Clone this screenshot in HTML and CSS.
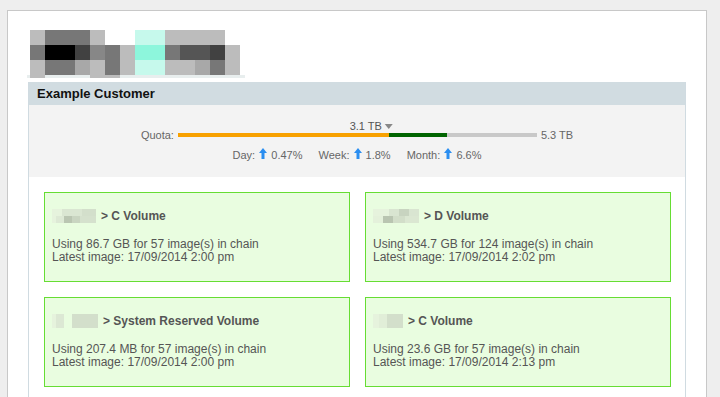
FILE: index.html
```html
<!DOCTYPE html>
<html>
<head>
<meta charset="utf-8">
<link rel="stylesheet" href="styles.css">
</head>
<body>
<div class="page">
  <div class="logo">
    <div class="logo-grid">
      <span class="g2"></span><span class="g4"></span><span class="g4"></span><span class="g4"></span><span class="g2"></span><span class="w"></span><span class="w"></span><span class="m1"></span><span class="m1"></span><span class="g2"></span><span class="g2"></span><span class="g2"></span><span class="g2"></span><span class="w"></span>
      <span class="g4"></span><span class="k"></span><span class="k"></span><span class="g6"></span><span class="g3"></span><span class="g4"></span><span class="g2"></span><span class="m2"></span><span class="m2"></span><span class="g4"></span><span class="g5"></span><span class="g5"></span><span class="g6"></span><span class="g2"></span>
      <span class="g2"></span><span class="g4"></span><span class="g4"></span><span class="g1"></span><span class="g2"></span><span class="g4"></span><span class="g2"></span><span class="m1"></span><span class="m1"></span><span class="g2"></span><span class="g2"></span><span class="g1"></span><span class="g4"></span><span class="g2"></span>
    </div>
    <div class="logo-strip"></div>
  </div>

  <div class="customer">
    <div class="cust-head">Example Customer</div>
    <div class="quota-panel">
      <div class="quota-row">
        <span class="q-label">Quota:</span>
        <div class="q-bar">
          <div class="q-used"></div><div class="q-growth"></div><div class="q-free"></div>
          <div class="q-marker">3.1 TB <span class="tri"></span></div>
        </div>
        <span class="q-total">5.3 TB</span>
      </div>
      <div class="stats">
        <span class="stat">Day: <svg class="up" viewBox="0 0 8 11" width="8" height="11"><path d="M4 0 L8 5 H5.5 V11 H2.5 V5 H0 Z"/></svg> 0.47%</span>
        <span class="stat">Week: <svg class="up" viewBox="0 0 8 11" width="8" height="11"><path d="M4 0 L8 5 H5.5 V11 H2.5 V5 H0 Z"/></svg> 1.8%</span>
        <span class="stat">Month: <svg class="up" viewBox="0 0 8 11" width="8" height="11"><path d="M4 0 L8 5 H5.5 V11 H2.5 V5 H0 Z"/></svg> 6.6%</span>
      </div>
    </div>
    <div class="volumes">
      <div class="vol">
        <div class="vol-title"><span class="blur b1"></span>&gt; C Volume</div>
        <div class="vol-body">Using 86.7 GB for 57 image(s) in chain<br>Latest image: 17/09/2014 2:00 pm</div>
      </div>
      <div class="vol">
        <div class="vol-title"><span class="blur b2"></span>&gt; D Volume</div>
        <div class="vol-body">Using 534.7 GB for 124 image(s) in chain<br>Latest image: 17/09/2014 2:02 pm</div>
      </div>
      <div class="vol">
        <div class="vol-title"><span class="blur b3"></span>&gt; System Reserved Volume</div>
        <div class="vol-body">Using 207.4 MB for 57 image(s) in chain<br>Latest image: 17/09/2014 2:00 pm</div>
      </div>
      <div class="vol">
        <div class="vol-title"><span class="blur b4"></span>&gt; C Volume</div>
        <div class="vol-body">Using 23.6 GB for 57 image(s) in chain<br>Latest image: 17/09/2014 2:13 pm</div>
      </div>
    </div>
  </div>
</div>
</body>
</html>
```

FILE: styles.css
```css
html, body {
  margin: 0;
  padding: 0;
  background: #eeeeee;
  font-family: "Liberation Sans", Arial, sans-serif;
}

.page {
  margin: 10px 0 0 7px;
  width: 658px;
  min-height: 460px;
  background: #ffffff;
  border: 1px solid #c8c8c8;
  padding: 19px 20px 0;
}

.logo {
  display: flex;
  flex-direction: column;
}

.logo-grid {
  margin-left: 2px;
  display: grid;
  grid-template-columns: repeat(14, 15px);
  grid-auto-rows: 15px;
}

.logo-grid span { display: block; }
.logo-grid .w { background: #ffffff; }
.logo-grid .k { background: #000000; }
.logo-grid .g1 { background: #a8a8a8; }
.logo-grid .g2 { background: #bcbcbc; }
.logo-grid .g3 { background: #878787; }
.logo-grid .g4 { background: #777777; }
.logo-grid .g5 { background: #555555; }
.logo-grid .g6 { background: #414141; }
.logo-grid .m1 { background: #c6f9ec; }
.logo-grid .m2 { background: #8df6dc; }

.logo-strip {
  margin-left: -1px;
  width: 218px;
  height: 3px;
  background: linear-gradient(to right,
    #e8eeee 0, #e8eeee 3px,
    #bcbcbc 3px, #bcbcbc 18px,
    #e8eeee 18px, #e8eeee 63px,
    #bcbcbc 63px, #bcbcbc 93px,
    #e8eeee 93px, #e8eeee 100%);
}

.customer {
  margin-top: 4px;
  border-left: 1px solid #d0dbe1;
  border-right: 1px solid #d0dbe1;
}

.cust-head {
  height: 23px;
  line-height: 24px;
  padding-left: 8px;
  background: #d1dce1;
  color: #111111;
  font-size: 13px;
  font-weight: bold;
}

.quota-panel {
  background: #f3f3f3;
  padding: 23px 0 15px;
  font-size: 11px;
  color: #666666;
}

.quota-row {
  display: flex;
  justify-content: center;
  align-items: center;
  gap: 4px;
  height: 14px;
}

.q-bar {
  position: relative;
  display: flex;
  width: 359px;
  height: 4px;
}

.q-used { width: 211px; background: #f8a100; }
.q-growth { width: 58px; background: #006400; }
.q-free { flex: 1; background: #c8c8c8; }

.q-marker {
  position: absolute;
  bottom: 100%;
  left: 215px;
  transform: translateX(-100%);
  white-space: nowrap;
  line-height: 13px;
  color: #555555;
}

.tri {
  display: inline-block;
  width: 0;
  height: 0;
  border-left: 4px solid transparent;
  border-right: 4px solid transparent;
  border-top: 5px solid #888888;
  vertical-align: 1px;
}

.stats {
  margin-top: 6px;
  display: flex;
  justify-content: center;
  gap: 16px;
  line-height: 13px;
}

.up {
  fill: #2b8ef0;
  vertical-align: 0;
  margin: 0 1px;
}

.volumes {
  display: grid;
  grid-template-columns: 1fr 1fr;
  gap: 15px;
  padding: 15px 14px 15px 15px;
}

.vol {
  background: #e9fde0;
  border: 1px solid #66dd33;
  padding: 15px 7px 17px;
  color: #555555;
  font-size: 12px;
}

.vol-title {
  display: flex;
  align-items: center;
  height: 16px;
  font-weight: bold;
}

.vol-body {
  margin-top: 14px;
  line-height: 13px;
}

.blur {
  display: inline-block;
  height: 14px;
  margin-right: 5px;
}

.b1 {
  width: 44px;
  background:
    linear-gradient(to right, #e6f3dd 0, #e6f3dd 4px, #dde9d5 4px, #dde9d5 12px, #bac6b2 12px, #bac6b2 20px, #c9d5c1 20px, #c9d5c1 28px, #d5e1cd 28px) bottom / 100% 7px no-repeat,
    linear-gradient(to right, #e6f3dd 0, #e6f3dd 10px, #dae6d2 10px, #dae6d2 30px, #d3dfcb 30px) top / 100% 7px no-repeat;
}

.b2 {
  width: 46px;
  background:
    linear-gradient(to right, #e4f1db 0, #e4f1db 10px, #b9c5b1 10px, #b9c5b1 20px, #d2dec9 20px, #d2dec9 32px, #dbe7d2 32px) bottom / 100% 7px no-repeat,
    linear-gradient(to right, #e6f3dd 0, #e6f3dd 16px, #d9e5d1 16px, #d9e5d1 26px, #c8d4c0 26px, #c8d4c0 36px, #d9e5d1 36px) top / 100% 7px no-repeat;
}

.b3 {
  width: 46px;
  background:
    linear-gradient(to right, #e6f3dd 0, #e6f3dd 4px, #dce8d4 4px, #dce8d4 12px, #e9fde0 12px, #e9fde0 20px, #d3dfcb 20px, #d3dfcb 46px) bottom / 100% 14px no-repeat;
}

.b4 {
  width: 30px;
  background:
    linear-gradient(to right, #e6f3dd 0, #e6f3dd 6px, #e1eed8 6px, #e1eed8 14px, #d3dfcb 14px) top / 100% 14px no-repeat;
}
```
